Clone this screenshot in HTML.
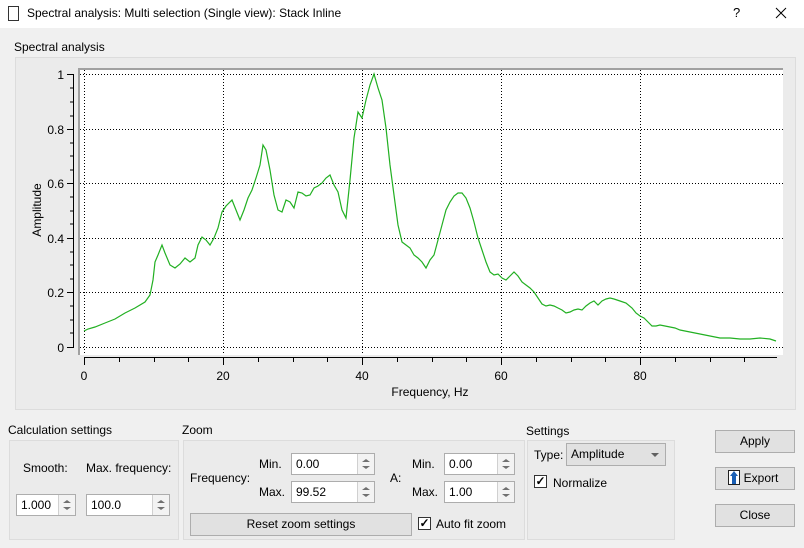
<!DOCTYPE html>
<html><head><style>
body{margin:0;width:804px;height:548px;background:#f0f0f0;font-family:"Liberation Sans",sans-serif;font-size:12px;color:#000;position:relative;overflow:hidden}
.a{position:absolute}
.tb{left:0;top:0;width:804px;height:28px;background:#fff}
.grp{border:1px solid #dcdcdc;background:#ebebeb}
.sp{background:#fff;border:1px solid #adadad;box-sizing:border-box;font-size:12px;padding:3px 0 0 4px}
.sp .ar{position:absolute;right:0;top:0;bottom:0;width:16px;border-left:1px solid #d0d0d0;background:#f3f3f3}
.sp .ar:before{content:"";position:absolute;left:4px;top:5px;border:4px solid transparent;border-bottom:3px solid #707070;border-top:0}
.sp .ar:after{content:"";position:absolute;left:4px;bottom:5px;border:4px solid transparent;border-top:3px solid #707070;border-bottom:0}
.btn{background:#e1e1e1;border:1px solid #adadad;box-sizing:border-box;text-align:center;font-size:12px;line-height:20px}
.cb{width:13px;height:13px;border:1px solid #333;background:#fff;box-sizing:border-box;font-size:12px;line-height:11px;text-align:center;font-weight:bold}
</style></head><body>
<div class="a tb"></div>
<div class="a" style="left:8px;top:6px;width:11px;height:15px;border:1px solid #333;box-sizing:border-box"></div>
<div class="a" style="left:27px;top:6px;font-size:12px">Spectral analysis: Multi selection (Single view): Stack Inline</div>
<div class="a" style="left:733px;top:5px;font-size:13px">?</div>
<svg class="a" style="left:775px;top:7px" width="12" height="12"><path d="M1 1L11 11M11 1L1 11" stroke="#000" stroke-width="1"/></svg>
<div class="a" style="left:14px;top:40px">Spectral analysis</div>
<div class="a grp" style="left:15px;top:57px;width:779px;height:351px"></div>
<svg class="a" style="left:0;top:0" width="804" height="420">
<rect x="79" y="68" width="704" height="287" fill="#fff"/>
<line x1="79" y1="69" x2="783" y2="69" stroke="#a0a0a0" stroke-width="2"/>
<line x1="79" y1="68" x2="79" y2="355" stroke="#a0a0a0" stroke-width="2"/>
<g stroke="#000" stroke-dasharray="1,2" stroke-width="1">
<line x1="80" y1="74.5" x2="783" y2="74.5"/><line x1="80" y1="129.5" x2="783" y2="129.5"/><line x1="80" y1="183.5" x2="783" y2="183.5"/><line x1="80" y1="238.5" x2="783" y2="238.5"/><line x1="80" y1="292.5" x2="783" y2="292.5"/><line x1="80" y1="347.5" x2="783" y2="347.5"/>
<line x1="84.5" y1="70" x2="84.5" y2="354"/><line x1="223.5" y1="70" x2="223.5" y2="354"/><line x1="362.5" y1="70" x2="362.5" y2="354"/><line x1="501.5" y1="70" x2="501.5" y2="354"/><line x1="640.5" y1="70" x2="640.5" y2="354"/>
</g>
<g stroke="#000" stroke-width="1">
<line x1="73.5" y1="74" x2="73.5" y2="348"/>
<line x1="67" y1="74.5" x2="74" y2="74.5"/><line x1="67" y1="129.5" x2="74" y2="129.5"/><line x1="67" y1="183.5" x2="74" y2="183.5"/><line x1="67" y1="238.5" x2="74" y2="238.5"/><line x1="67" y1="292.5" x2="74" y2="292.5"/><line x1="67" y1="347.5" x2="74" y2="347.5"/>
<line x1="70" y1="88" x2="74" y2="88"/><line x1="70" y1="102" x2="74" y2="102"/><line x1="70" y1="116" x2="74" y2="116"/><line x1="70" y1="143" x2="74" y2="143"/><line x1="70" y1="156" x2="74" y2="156"/><line x1="70" y1="170" x2="74" y2="170"/><line x1="70" y1="197" x2="74" y2="197"/><line x1="70" y1="211" x2="74" y2="211"/><line x1="70" y1="224" x2="74" y2="224"/><line x1="70" y1="252" x2="74" y2="252"/><line x1="70" y1="265" x2="74" y2="265"/><line x1="70" y1="279" x2="74" y2="279"/><line x1="70" y1="306" x2="74" y2="306"/><line x1="70" y1="320" x2="74" y2="320"/><line x1="70" y1="333" x2="74" y2="333"/>
<line x1="84" y1="357.5" x2="777" y2="357.5"/>
<line x1="84.5" y1="357" x2="84.5" y2="365"/><line x1="119.5" y1="357" x2="119.5" y2="362"/><line x1="154.5" y1="357" x2="154.5" y2="362"/><line x1="188.5" y1="357" x2="188.5" y2="362"/><line x1="223.5" y1="357" x2="223.5" y2="365"/><line x1="258.5" y1="357" x2="258.5" y2="362"/><line x1="293.5" y1="357" x2="293.5" y2="362"/><line x1="327.5" y1="357" x2="327.5" y2="362"/><line x1="362.5" y1="357" x2="362.5" y2="365"/><line x1="397.5" y1="357" x2="397.5" y2="362"/><line x1="432.5" y1="357" x2="432.5" y2="362"/><line x1="466.5" y1="357" x2="466.5" y2="362"/><line x1="501.5" y1="357" x2="501.5" y2="365"/><line x1="536.5" y1="357" x2="536.5" y2="362"/><line x1="571.5" y1="357" x2="571.5" y2="362"/><line x1="605.5" y1="357" x2="605.5" y2="362"/><line x1="640.5" y1="357" x2="640.5" y2="365"/><line x1="675.5" y1="357" x2="675.5" y2="362"/><line x1="710.5" y1="357" x2="710.5" y2="362"/><line x1="744.5" y1="357" x2="744.5" y2="362"/>
</g>
<g font-family="Liberation Sans" font-size="12" fill="#000" text-anchor="end">
<text x="64" y="79">1</text><text x="64" y="134">0.8</text><text x="64" y="188">0.6</text><text x="64" y="243">0.4</text><text x="64" y="297">0.2</text><text x="64" y="352">0</text>
</g>
<g font-family="Liberation Sans" font-size="12" fill="#000" text-anchor="middle">
<text x="84" y="380">0</text><text x="223" y="380">20</text><text x="362" y="380">40</text><text x="501" y="380">60</text><text x="640" y="380">80</text>
<text x="430" y="396">Frequency, Hz</text>
<text transform="translate(41,210) rotate(-90)">Amplitude</text>
</g>
<polyline fill="none" stroke="#22b022" stroke-width="1.2" points="84,331 88,329 95,327 105,323 115,319 125,313 135,308 145,302 150,295 153,280 155,262 158,255 162,245 165,253 170,265 175,268 180,264 185,258 190,262 195,258 198,245 202,237 206,240 210,245 214,238 218,228 222,212 226,206 232,200 236,210 240,220 244,210 248,198 252,190 256,178 260,165 263,145 266,150 270,170 274,195 278,210 282,212 286,200 290,202 294,208 298,192 302,193 306,196 310,195 314,188 318,186 322,183 326,178 330,175 334,185 338,192 342,210 346,218 350,180 354,138 358,112 362,118 366,100 370,85 374,74 378,88 382,100 386,128 390,165 394,195 398,225 402,242 406,245 410,248 414,255 418,258 422,262 426,268 430,260 434,255 438,240 442,225 446,210 450,202 454,196 458,193 462,193 466,198 470,208 474,222 478,238 482,250 486,262 490,272 494,275 498,274 502,278 506,280 510,276 514,272 518,276 522,282 526,285 530,288 534,292 538,298 542,304 546,306 550,305 554,306 558,308 562,310 566,313 570,312 574,310 578,309 582,310 586,306 590,303 594,301 598,305 602,301 606,299 610,298 614,299 620,301 626,303 632,308 636,313 640,316 644,318 648,322 652,326 656,326 660,325 665,326 670,327 675,328 680,330 690,332 700,334 710,336 720,338 730,338 740,339 750,339 760,338 770,339 776,341"/>
</svg>

<div class="a" style="left:8px;top:423px">Calculation settings</div>
<div class="a grp" style="left:9px;top:440px;width:168px;height:98px"></div>
<div class="a" style="left:23px;top:461px">Smooth:</div>
<div class="a" style="left:86px;top:461px">Max. frequency:</div>
<div class="a sp" style="left:16px;top:494px;width:60px;height:22px">1.000<div class="ar"></div></div>
<div class="a sp" style="left:86px;top:494px;width:84px;height:22px">100.0<div class="ar"></div></div>

<div class="a" style="left:182px;top:423px">Zoom</div>
<div class="a grp" style="left:183px;top:440px;width:340px;height:98px"></div>
<div class="a" style="left:190px;top:471px">Frequency:</div>
<div class="a" style="left:259px;top:457px">Min.</div>
<div class="a" style="left:259px;top:485px">Max.</div>
<div class="a sp" style="left:291px;top:453px;width:84px;height:22px">0.00<div class="ar"></div></div>
<div class="a sp" style="left:291px;top:481px;width:84px;height:22px">99.52<div class="ar"></div></div>
<div class="a" style="left:390px;top:471px">A:</div>
<div class="a" style="left:412px;top:457px">Min.</div>
<div class="a" style="left:412px;top:485px">Max.</div>
<div class="a sp" style="left:444px;top:453px;width:71px;height:22px">0.00<div class="ar"></div></div>
<div class="a sp" style="left:444px;top:481px;width:71px;height:22px">1.00<div class="ar"></div></div>
<div class="a btn" style="left:190px;top:513px;width:222px;height:23px">Reset zoom settings</div>
<div class="a cb" style="left:418px;top:517px">✓</div>
<div class="a" style="left:436px;top:517px">Auto fit zoom</div>

<div class="a" style="left:526px;top:424px">Settings</div>
<div class="a grp" style="left:527px;top:440px;width:146px;height:98px"></div>
<div class="a" style="left:534px;top:448px">Type:</div>
<div class="a btn" style="left:566px;top:443px;width:100px;height:23px;text-align:left;padding-left:4px">Amplitude</div>
<div class="a" style="left:651px;top:453px;border:4px solid transparent;border-top:4px solid #606060"></div>
<div class="a cb" style="left:534px;top:475px">✓</div>
<div class="a" style="left:553px;top:476px">Normalize</div>

<div class="a btn" style="left:715px;top:430px;width:80px;height:23px">Apply</div>
<div class="a btn" style="left:715px;top:467px;width:80px;height:23px;padding-left:12px">Export</div>
<div class="a" style="left:728px;top:470px;width:12px;height:15px;border:1px solid #222;background:#fff;box-sizing:border-box"><div style="position:absolute;left:1px;top:0;border:4px solid transparent;border-bottom:5px solid #1a5fb4;border-top:0"></div><div style="position:absolute;left:3px;top:5px;width:4px;height:8px;background:#1a5fb4"></div></div>
<div class="a btn" style="left:715px;top:504px;width:80px;height:23px">Close</div>
</body></html>
